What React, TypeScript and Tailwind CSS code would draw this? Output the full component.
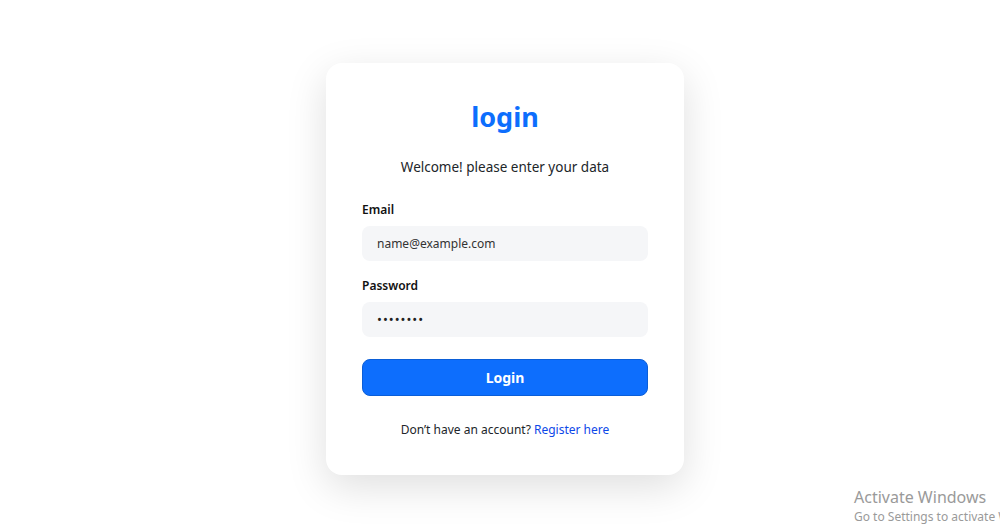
import React from "react";

export default function App() {
  return (
    <div
      className="relative flex h-[531px] w-full justify-center overflow-hidden bg-white pl-[10px] pt-[63px]"
      style={{ fontFamily: '"Noto Sans", "Open Sans", sans-serif' }}
    >
      <div className="flex h-[412px] w-[358px] flex-col rounded-2xl bg-white px-9 pt-[27px] shadow-[0_12px_40px_rgba(0,0,0,0.13)]">
        <h1 className="text-center text-[27px] font-bold leading-[54px] text-[#0d6efd]">login</h1>
        <p className="mt-[13px] text-center text-[13.5px] text-[#212529]">Welcome! please enter your data</p>

        <label className="mt-[24px] text-[12px] font-semibold text-[#111]">Email</label>
        <div className="mt-[7px] flex h-[35px] items-center rounded-lg bg-[#f5f6f8] px-[15px] text-[12px] text-[#333]">
          name@example.com
        </div>

        <label className="mt-[16px] text-[12px] font-semibold text-[#111]">Password</label>
        <div className="mt-[7px] flex h-[35px] items-center rounded-lg bg-[#f5f6f8] px-[15px] text-[13px] tracking-[1px] text-[#222]">
          ••••••••
        </div>

        <button className="mt-[22px] h-[37px] rounded-lg border border-[#0b5ed7] bg-[#0d6efd] text-[14px] font-bold text-white">
          Login
        </button>

        <p className="mt-[25px] text-center text-[12px] text-[#212529]">
          Don’t have an account? <span className="text-[#0d47e8]">Register here</span>
        </p>
      </div>

      <div className="absolute left-[854px] top-[486px] whitespace-nowrap text-[#9a9a9a]">
        <div className="text-[16px] leading-[22px]">Activate Windows</div>
        <div className="text-[12px] leading-[18px]">Go to Settings to activate Windows.</div>
      </div>
    </div>
  );
}
